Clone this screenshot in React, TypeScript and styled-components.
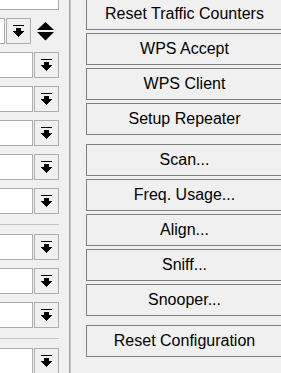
import React from "react";
import styled, { createGlobalStyle } from "styled-components";

const GlobalStyle = createGlobalStyle`
  html, body {
    margin: 0;
    padding: 0;
    background: #f0f0f0;
  }
  * {
    box-sizing: border-box;
  }
`;

const Window = styled.div`
  width: 281px;
  height: 373px;
  overflow: hidden;
  display: flex;
  background: #f0f0f0;
  font-family: "Liberation Sans", Arial, sans-serif;
`;

const LeftPanel = styled.div`
  width: 69px;
  flex-shrink: 0;
  overflow: hidden;
`;

const FieldList = styled.div`
  display: flex;
  flex-direction: column;
  gap: 8px;
  margin: -16px 10px 0 -60px;
`;

const Row = styled.div`
  display: flex;
  gap: 1px;
  height: 26px;
`;

const Field = styled.div`
  flex: 1;
  background: #ffffff;
  border: 1px solid #acacac;
`;

const DropButton = styled.div`
  width: 25px;
  flex-shrink: 0;
  background: #f0f0f0;
  border: 1px solid #adadad;
  display: flex;
  align-items: center;
  justify-content: center;
`;

const SpinCell = styled.div`
  width: 27px;
  flex-shrink: 0;
  display: flex;
  align-items: center;
  justify-content: center;
`;

const HLine = styled.div`
  height: 1px;
  margin: 2px 0 1px;
  background: #c4c4c4;
`;

const Divider = styled.div`
  width: 2px;
  flex-shrink: 0;
  border-left: 1px solid #a0a0a0;
  background: #c8c8c8;
`;

const RightPanel = styled.div`
  flex: 1;
  padding-left: 15px;
  overflow: hidden;
`;

const ButtonList = styled.div`
  width: 197px;
  display: flex;
  flex-direction: column;
  gap: 3px;
  margin-top: -2px;
`;

const ActionButton = styled.div<{ $groupStart?: boolean }>`
  height: 32px;
  flex-shrink: 0;
  border: 1px solid #7f7f7f;
  background: #f0f0f0;
  display: flex;
  align-items: center;
  justify-content: center;
  font-size: 16px;
  color: #000;
  white-space: nowrap;
  margin-top: ${(p) => (p.$groupStart ? "6px" : "0")};
`;

const DownIcon = () => (
  <svg width="11" height="12" viewBox="0 0 11 12" shapeRendering="crispEdges">
    <rect x="0" y="0" width="11" height="1" fill="#000" />
    <rect x="3" y="3" width="5" height="3" fill="#000" />
    <rect x="0" y="6" width="11" height="1" fill="#000" />
    <rect x="1" y="7" width="9" height="1" fill="#000" />
    <rect x="2" y="8" width="7" height="1" fill="#000" />
    <rect x="3" y="9" width="5" height="1" fill="#000" />
    <rect x="4" y="10" width="3" height="1" fill="#000" />
    <rect x="5" y="11" width="1" height="1" fill="#000" />
  </svg>
);

const UpDownIcon = () => (
  <svg width="17" height="19" viewBox="0 0 17 19">
    <polygon points="8.5,0 17,8 0,8" fill="#000" />
    <polygon points="0,10 17,10 8.5,18.5" fill="#000" />
  </svg>
);

const groups = [
  ["Reset Traffic Counters", "WPS Accept", "WPS Client", "Setup Repeater"],
  ["Scan...", "Freq. Usage...", "Align...", "Sniff...", "Snooper..."],
  ["Reset Configuration"],
];

function App() {
  return (
    <>
      <GlobalStyle />
      <Window>
        <LeftPanel>
          <FieldList>
            <Row>
              <Field />
            </Row>
            <Row>
              <Field />
              <DropButton>
                <DownIcon />
              </DropButton>
              <SpinCell>
                <UpDownIcon />
              </SpinCell>
            </Row>
            {[0, 1, 2, 3, 4].map((i) => (
              <Row key={"a" + i}>
                <Field />
                <DropButton>
                  <DownIcon />
                </DropButton>
              </Row>
            ))}
            <HLine />
            {[0, 1, 2].map((i) => (
              <Row key={"b" + i}>
                <Field />
                <DropButton>
                  <DownIcon />
                </DropButton>
              </Row>
            ))}
            <HLine />
            <Row>
              <Field />
              <DropButton>
                <DownIcon />
              </DropButton>
            </Row>
          </FieldList>
        </LeftPanel>
        <Divider />
        <RightPanel>
          <ButtonList>
            {groups.map((g, gi) =>
              g.map((label, i) => (
                <ActionButton key={label} $groupStart={gi > 0 && i === 0}>
                  {label}
                </ActionButton>
              ))
            )}
          </ButtonList>
        </RightPanel>
      </Window>
    </>
  );
}

export default App;
